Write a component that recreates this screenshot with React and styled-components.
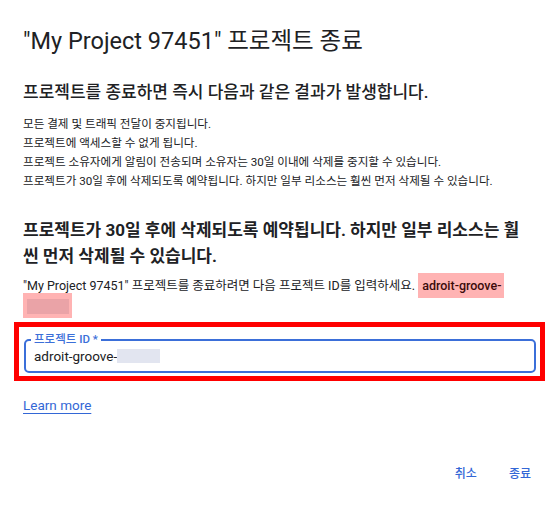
import React from "react";
import styled, { createGlobalStyle } from "styled-components";

const GlobalStyle = createGlobalStyle`
  body {
    margin: 0;
    background: #fff;
    color: #202124;
    font-family: Roboto, "Noto Sans CJK KR", sans-serif;
  }
`;

const Dialog = styled.div`
  padding: 27px 24px 0 23px;
`;

const Title = styled.h1`
  margin: 0;
  font-size: 23.5px;
  font-weight: 400;
  line-height: 28px;
`;

const Heading = styled.h2`
  margin: 25px 0 0;
  font-size: 17px;
  font-weight: 500;
  line-height: 24px;
`;

const Consequences = styled.ul`
  margin: 11px 0 0;
  padding: 0;
  list-style: none;
  font-size: 11.6px;
  line-height: 19px;
`;

const Warning = styled.h3`
  margin: 26px 0 0;
  padding-right: 12px;
  font-size: 17px;
  font-weight: 700;
  line-height: 26px;
`;

const Prompt = styled.p`
  margin: 7px 0 0;
  font-size: 12.5px;
  line-height: 20px;
`;

const Highlight = styled.span`
  background: #ffb3b3;
  color: #3b0b0b;
  font-weight: 500;
  padding: 5px 3px 5px 4px;
  box-decoration-break: clone;
  -webkit-box-decoration-break: clone;
`;

const Hidden = styled.span`
  display: inline-block;
  width: ${(p) => p.$w}px;
  height: ${(p) => p.$h}px;
  background: ${(p) => p.$bg};
  vertical-align: middle;
`;

const Annotation = styled.div`
  margin: 6px -9px 0;
  border: 5px solid #ff0000;
  padding: 12px 4px 3px 5px;
`;

const Field = styled.div`
  position: relative;
  height: 30px;
  border: 2px solid #3b6fd9;
  border-radius: 5px;
  display: flex;
  align-items: center;
  padding: 0 8px;
  font-size: 13.5px;
  color: #202124;
`;

const FieldLabel = styled.span`
  position: absolute;
  top: -9px;
  left: 5px;
  padding: 0 3px;
  background: #fff;
  color: #3b6fd9;
  font-size: 11.5px;
  font-weight: 500;
  line-height: 14px;
`;

const LearnMore = styled.a`
  display: inline-block;
  margin-top: 16px;
  font-size: 13.5px;
  line-height: 16px;
  color: #3367d6;
  text-decoration: underline;
  text-underline-offset: 3px;
  cursor: pointer;
`;

const Footer = styled.div`
  display: flex;
  justify-content: flex-end;
  gap: 16px;
  margin: 44px -3px 0 0;
`;

const TextButton = styled.button`
  border: 0;
  background: none;
  padding: 8px;
  font-family: inherit;
  font-size: 12px;
  font-weight: 500;
  line-height: 16px;
  color: #3367d6;
  cursor: pointer;
`;

const consequences = [
  "모든 결제 및 트래픽 전달이 중지됩니다.",
  "프로젝트에 액세스할 수 없게 됩니다.",
  "프로젝트 소유자에게 알림이 전송되며 소유자는 30일 이내에 삭제를 중지할 수 있습니다.",
  "프로젝트가 30일 후에 삭제되도록 예약됩니다. 하지만 일부 리소스는 훨씬 먼저 삭제될 수 있습니다.",
];

export default function App() {
  return (
    <>
      <GlobalStyle />
      <Dialog>
        <Title>"My Project 97451" 프로젝트 종료</Title>
        <Heading>프로젝트를 종료하면 즉시 다음과 같은 결과가 발생합니다.</Heading>
        <Consequences>
          {consequences.map((c) => (
            <li key={c}>{c}</li>
          ))}
        </Consequences>
        <Warning>
          프로젝트가 30일 후에 삭제되도록 예약됩니다. 하지만 일부 리소스는 훨씬 먼저 삭제될 수 있습니다.
        </Warning>
        <Prompt>
          "My Project 97451" 프로젝트를 종료하려면 다음 프로젝트 ID를 입력하세요.{" "}
          <Highlight>
            adroit-groove-
            <Hidden $w={42} $h={15} $bg="#eaa3a7" />
          </Highlight>
        </Prompt>
        <Annotation>
          <Field>
            <FieldLabel>프로젝트 ID *</FieldLabel>
            adroit-groove-
            <Hidden $w={43} $h={14} $bg="#e2e5f0" />
          </Field>
        </Annotation>
        <LearnMore>Learn more</LearnMore>
        <Footer>
          <TextButton>취소</TextButton>
          <TextButton>종료</TextButton>
        </Footer>
      </Dialog>
    </>
  );
}
